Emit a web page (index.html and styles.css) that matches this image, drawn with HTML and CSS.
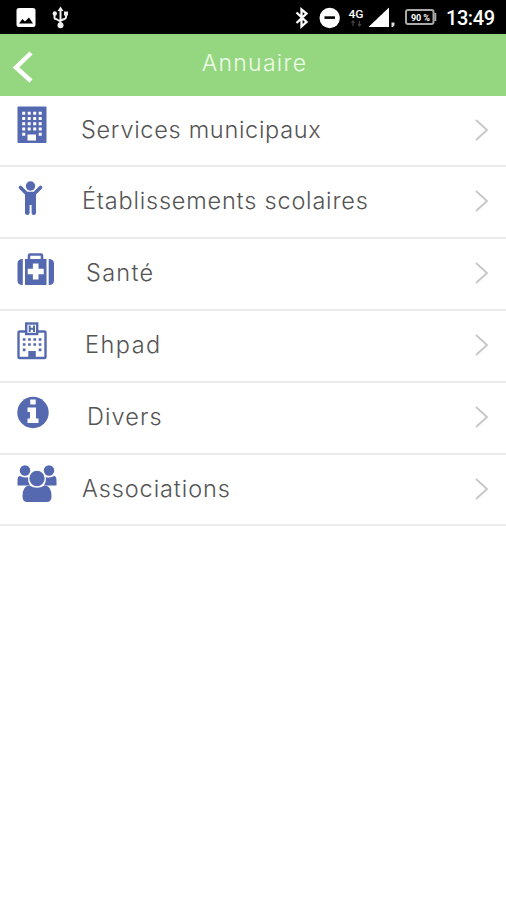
FILE: index.html
```
<!DOCTYPE html>
<html lang="fr">
<head>
  <meta charset="utf-8">
  <title>Annuaire</title>
  <link rel="stylesheet" href="styles.css">
</head>
<body>
  <div class="status-bar">
    <svg class="status-icons" width="506" height="34" viewBox="0 0 506 34">
      <!-- picture -->
      <rect x="16.500" y="8" width="19" height="19" rx="2.500" fill="#fff"/>
      <path d="M19 23.500l3.500-4.500 2.500 2.500 4-4 4 6z" fill="#000"/>
      <!-- usb -->
      <g fill="none" stroke="#eee" stroke-width="2">
        <path d="M60.500 10v15M54.500 14v3.500q0 1.500 1.500 1.500l4.500 2.500M66 14v3q0 1.500-1.500 2l-4 1.500"/>
      </g>
      <path d="M57.500 11l3-4.500 3 4.500zM64 11.500h4v4h-4z" fill="#eee"/>
      <circle cx="54.800" cy="13.500" r="2.200" fill="#eee"/>
      <circle cx="60.500" cy="25.300" r="3" fill="#eee"/>
      <!-- bluetooth -->
      <path d="M296.500 12.500l10 9.500-5 4.500v-17l5 4-10 9.500" fill="none" stroke="#fff" stroke-width="2.300"/>
      <!-- do not disturb -->
      <circle cx="329.700" cy="18" r="10.200" fill="#fff"/>
      <rect x="324.500" y="16.300" width="10.500" height="2.600" fill="#000"/>
      <!-- network -->
      <text class="network" x="348.500" y="17.500" textLength="15" lengthAdjust="spacingAndGlyphs">4G</text>
      <path d="M353 21v5M351.500 23l1.500-2 1.500 2M359.500 21v5M358 24l1.500 2 1.500-2" fill="none" stroke="#444" stroke-width="1.200"/>
      <path d="M389 7.500v19.500h-20.500z" fill="#fff"/>
      <path d="M391.500 22.500h3v2.500l-1.500 2h-1.500z" fill="#ddd"/>
      <!-- battery -->
      <rect x="406" y="10" width="27.500" height="14" rx="2" fill="none" stroke="#aaa" stroke-width="2"/>
      <path d="M435.300 13v8" stroke="#aaa" stroke-width="2"/>
      <text class="battery" x="411" y="20.700" textLength="19">90 %</text>
      <text class="clock" x="446" y="25" textLength="49">13:49</text>
    </svg>
  </div>

  <div class="header">
    <svg class="back" width="22" height="34" viewBox="0 0 22 34">
      <path d="M19 3L4 17.500 19 31" fill="none" stroke="#fff" stroke-width="4.500"/>
    </svg>
    <h1>Annuaire</h1>
  </div>

  <ul class="list">
    <li class="row">
      <svg class="icon" width="64" height="70" viewBox="0 0 64 70">
        <rect x="17.500" y="10.500" width="29" height="36.500" rx="1" fill="#5569b0"/>
        <path d="M22.200 17.300h20M22.200 22.500h20M22.200 27.700h20M22.200 33h20" stroke="#fff" stroke-width="3" stroke-dasharray="3 2.500"/>
        <path d="M22.200 36.800h3v3h-3zM38.700 36.800h3v3h-3zM27.500 38.500h8.500v6h-8.500z" fill="#fff"/>
      </svg>
      <span class="label services">Services municipaux</span>
      <svg class="arrow" width="16" height="24" viewBox="0 0 16 24"><path d="M2 2l11 10L2 22"/></svg>
    </li>
    <li class="row">
      <svg class="icon" width="64" height="70" viewBox="0 0 64 70">
        <circle cx="30.500" cy="20" r="4.700" fill="#5569b0"/>
        <path d="M20.500 21.500l6 6h8l6-6" fill="none" stroke="#5569b0" stroke-width="3.600" stroke-linecap="round" stroke-linejoin="round"/>
        <path d="M25 26.500h11v20.500q0 2-2.200 2t-2.200-2v-8h-2v8q0 2-2.300 2t-2.300-2z" fill="#5569b0"/>
      </svg>
      <span class="label schools">Établissements scolaires</span>
      <svg class="arrow" width="16" height="24" viewBox="0 0 16 24"><path d="M2 2l11 10L2 22"/></svg>
    </li>
    <li class="row">
      <svg class="icon" width="64" height="70" viewBox="0 0 64 70">
        <path d="M29 21v-3.500q0-1 1-1h11q1 0 1 1V21" fill="none" stroke="#5569b0" stroke-width="2.600"/>
        <path d="M25 21h21.500v26H25zM22.800 21v26q-5.300 0-5.300-4.500v-17q0-4.500 5.300-4.500zM48.700 21v26q5.300 0 5.300-4.500v-17q0-4.500-5.300-4.500z" fill="#5569b0"/>
        <path d="M35.700 25.500v16M27.700 33.500h16" stroke="#fff" stroke-width="5.600"/>
      </svg>
      <span class="label health">Santé</span>
      <svg class="arrow" width="16" height="24" viewBox="0 0 16 24"><path d="M2 2l11 10L2 22"/></svg>
    </li>
    <li class="row">
      <svg class="icon" width="64" height="70" viewBox="0 0 64 70">
        <rect x="18.500" y="21.500" width="27" height="26.500" rx="1" fill="#fff" stroke="#5569b0" stroke-width="2.400"/>
        <rect x="26.200" y="13.500" width="11" height="10.500" fill="#fff" stroke="#5569b0" stroke-width="2.400"/>
        <path d="M29.700 15.500v6.500M34 15.500v6.500M29.700 18.800h4.300" stroke="#5569b0" stroke-width="2"/>
        <path d="M22.800 29.500h19M22.800 34.500h19" stroke="#5569b0" stroke-width="2.700" stroke-dasharray="2.700 2.600"/>
        <path d="M22.800 38.500h2.700v2.700h-2.700zM38.700 38.500h2.700v2.700h-2.700zM28.300 41h7.500v7h-7.500z" fill="#5569b0"/>
      </svg>
      <span class="label ehpad">Ehpad</span>
      <svg class="arrow" width="16" height="24" viewBox="0 0 16 24"><path d="M2 2l11 10L2 22"/></svg>
    </li>
    <li class="row">
      <svg class="icon" width="64" height="70" viewBox="0 0 64 70">
        <circle cx="33" cy="30.500" r="15.700" fill="#5569b0"/>
        <path d="M30.200 17.500h5.500v5h-5.500zM27.500 25.500h8.500v11h2.500v4.500H27.500v-4.500H30v-6.500h-2.500z" fill="#fff"/>
      </svg>
      <span class="label misc">Divers</span>
      <svg class="arrow" width="16" height="24" viewBox="0 0 16 24"><path d="M2 2l11 10L2 22"/></svg>
    </li>
    <li class="row">
      <svg class="icon" width="64" height="70" viewBox="0 0 64 70">
        <g fill="#5569b0">
          <circle cx="25" cy="16.500" r="5.200"/>
          <circle cx="49" cy="16.500" r="5.200"/>
          <path d="M17.500 31.500v-5q0-4.500 2.500-4.500 5 2.500 8.500 1v5l1.500 3.500zM56.500 31.500v-5q0-4.500-2.500-4.500-5 2.500-8.500 1v5l-1.500 3.500z"/>
          <circle cx="37" cy="24.500" r="8.300" stroke="#fff" stroke-width="1.300"/>
          <path d="M29.500 31.500q7.500 4.500 15 0 7 0 7 11 0 5.500-5 5.500h-19q-5 0-5-5.500 0-11 7-11z"/>
        </g>
      </svg>
      <span class="label clubs">Associations</span>
      <svg class="arrow" width="16" height="24" viewBox="0 0 16 24"><path d="M2 2l11 10L2 22"/></svg>
    </li>
  </ul>
</body>
</html>
```
FILE: styles.css
```
body {
  margin: 0;
  padding: 0;
  font-family: Inter, "Liberation Sans", sans-serif;
  background-color: #fff;
}

.status-bar {
  height: 34px;
  background-color: #000;
}

.status-icons {
  display: block;
}

.status-icons text {
  fill: #fff;
}

.network {
  font: 500 10px Roboto, sans-serif;
}

.battery {
  font: bold 9px Roboto, sans-serif;
}

.clock {
  font: 500 20px Roboto, sans-serif;
}

.header {
  display: flex;
  box-sizing: border-box;
  height: 62px;
  padding-left: 12px;
  background-color: #94d780;
}

.back {
  margin-top: 16px;
}

h1 {
  flex: 1;
  margin: 0 31px 0 0;
  color: #effbe9;
  font-size: 23px;
  font-weight: 300;
  line-height: 58px;
  text-align: center;
  letter-spacing: 1.3px;
}

.list {
  margin: 0;
  padding: 0;
  list-style-type: none;
}

.row {
  display: flex;
  box-sizing: border-box;
  height: 72px;
  border-bottom: 2px solid #ebebeb;
}

.row:first-child,
.row:last-child {
  height: 71px;
}

.icon {
  flex: none;
}

.row:not(:first-child) .icon {
  margin-top: -1px;
}

.label {
  flex: 1;
  color: #555;
  font-size: 23.5px;
  font-weight: 300;
  line-height: 68px;
  white-space: nowrap;
}

.services {
  padding-left: 17px;
  letter-spacing: 0.7px;
}

.schools {
  padding-left: 18px;
  letter-spacing: 0.8px;
}

.health {
  padding-left: 22px;
  letter-spacing: 1.3px;
}

.ehpad {
  padding-left: 21px;
  letter-spacing: 1.5px;
}

.misc {
  padding-left: 23px;
  letter-spacing: 1.1px;
}

.clubs {
  padding-left: 18px;
  letter-spacing: 0.9px;
}

.arrow {
  flex: none;
  margin: 22px 16px 0 0;
  fill: none;
  stroke: #c9c9c9;
  stroke-width: 2;
}
```
